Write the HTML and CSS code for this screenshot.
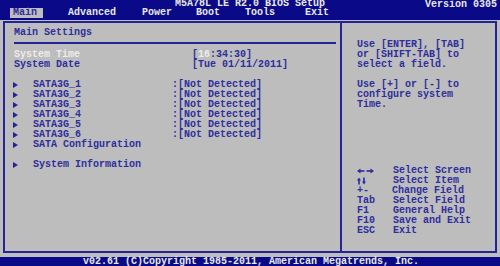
FILE: index.html
```html
<!DOCTYPE html>
<html lang="en">

<head>
    <meta charset="UTF-8">
    <meta name="viewport" content="width=device-width, initial-scale=1.0">
    <title>BIOS Setup - Main</title>
    <link rel="stylesheet" href="styles.css">
</head>

<body>
    <div class="topbar">
        <div class="title-row">
            <span></span>
            <span class="title">M5A78L LE R2.0 BIOS Setup</span>
            <span class="version">Version 0305</span>
        </div>
        <div class="tabs">
            <div class="tab"><span class="active">Main</span></div>
            <div class="tab"><span>Advanced</span></div>
            <div class="tab"><span>Power</span></div>
            <div class="tab"><span>Boot</span></div>
            <div class="tab"><span>Tools</span></div>
            <div class="tab"><span>Exit</span></div>
        </div>
    </div>

    <div class="screen">
        <div class="frame">
            <div class="left-panel">
                <div class="heading">Main Settings</div>
                <div class="rule"></div>

                <div class="row selected">
                    <span>System Time</span>
                    <span class="value">[<span class="field">16</span>:34:30]</span>
                </div>
                <div class="row">
                    <span>System Date</span>
                    <span class="value">[Tue 01/11/2011]</span>
                </div>

                <div class="blank"></div>

                <div class="sub"><i class="arrow"></i><span>SATA3G_1</span><span>:[Not Detected]</span></div>
                <div class="sub"><i class="arrow"></i><span>SATA3G_2</span><span>:[Not Detected]</span></div>
                <div class="sub"><i class="arrow"></i><span>SATA3G_3</span><span>:[Not Detected]</span></div>
                <div class="sub"><i class="arrow"></i><span>SATA3G_4</span><span>:[Not Detected]</span></div>
                <div class="sub"><i class="arrow"></i><span>SATA3G_5</span><span>:[Not Detected]</span></div>
                <div class="sub"><i class="arrow"></i><span>SATA3G_6</span><span>:[Not Detected]</span></div>
                <div class="sub"><i class="arrow"></i><span>SATA Configuration</span><span></span></div>

                <div class="blank"></div>

                <div class="sub"><i class="arrow"></i><span>System Information</span><span></span></div>
            </div>

            <div class="right-panel">
                <div class="help">
                    <div>Use [ENTER], [TAB]</div>
                    <div>or [SHIFT-TAB] to</div>
                    <div>select a field.</div>
                    <div class="blank"></div>
                    <div>Use [+] or [-] to</div>
                    <div>configure system</div>
                    <div>Time.</div>
                </div>

                <div class="legend">
                    <span class="key">
                        <svg width="17" height="10" viewBox="0 0 17 10">
                            <polygon points="0,5 3.5,2.5 3.5,7.5" fill="#2b2b9b"/>
                            <rect x="3" y="4.2" width="4.5" height="1.6" fill="#2b2b9b"/>
                            <rect x="9.5" y="4.2" width="4.5" height="1.6" fill="#2b2b9b"/>
                            <polygon points="17,5 13.5,2.5 13.5,7.5" fill="#2b2b9b"/>
                        </svg>
                    </span>
                    <span>Select Screen</span>
                    <span class="key">
                        <svg width="10" height="10" viewBox="0 0 10 10">
                            <polygon points="2,1.5 0,4.5 4,4.5" fill="#2b2b9b"/>
                            <rect x="1.2" y="4" width="1.6" height="4.5" fill="#2b2b9b"/>
                            <rect x="6.2" y="1.5" width="1.6" height="4.5" fill="#2b2b9b"/>
                            <polygon points="5,5.5 9,5.5 7,8.5" fill="#2b2b9b"/>
                        </svg>
                    </span>
                    <span>Select Item</span>
                    <span class="key">+-</span>
                    <span class="shift">Change Field</span>
                    <span class="key">Tab</span>
                    <span>Select Field</span>
                    <span class="key">F1</span>
                    <span>General Help</span>
                    <span class="key">F10</span>
                    <span>Save and Exit</span>
                    <span class="key">ESC</span>
                    <span>Exit</span>
                </div>
            </div>
        </div>
    </div>

    <div class="footer">v02.61 (C)Copyright 1985-2011, American Megatrends, Inc.</div>
</body>

</html>
```

FILE: styles.css
```css
* {
    margin: 0;
    padding: 0;
    box-sizing: border-box;
}

body {
    font-family: 'Liberation Mono', 'Courier New', monospace;
    font-weight: bold;
    font-size: 10px;
    line-height: 10px;
    background: #bdbdbd;
    color: #2e2e9e;
    width: 500px;
    height: 266px;
    overflow: hidden;
}

/* top bar */
.topbar {
    background: #0a0a88;
    color: #e8e8e8;
    height: 20px;
}

.title-row {
    display: grid;
    grid-template-columns: 1fr auto 1fr;
    height: 8px;
    line-height: 8px;
    align-items: start;
}

.version {
    justify-self: end;
    padding-right: 3px;
    margin-top: 1px;
}

.tabs {
    display: grid;
    grid-template-columns: 55px 74px 54px 49px 60px auto;
    padding-left: 10px;
    height: 10px;
}

.tab span {
    display: inline-block;
    height: 10px;
    padding: 0 6px 0 3px;
}

.tab .active {
    background: #bdbdbd;
    color: #2e2e9e;
}

/* main frame */
.screen {
    padding: 1px 3px 4px;
}

.frame {
    height: 232px;
    border: 2px solid #24249a;
    display: grid;
    grid-template-columns: 337px 1fr;
}

.left-panel {
    border-right: 2px solid #24249a;
    padding: 5px 4px 0 8px;
}

.heading {
    margin-left: 1px;
    height: 10px;
}

.rule {
    height: 2px;
    background: #24249a;
    margin: 4px 0 6px 1px;
}

.row {
    display: grid;
    grid-template-columns: 178px auto;
    margin-left: 1px;
    height: 10px;
}

.row.selected > span:first-child {
    color: #ececec;
}

.field {
    color: #ececec;
}

.blank {
    height: 10px;
}

.sub {
    display: grid;
    grid-template-columns: 20px 139px auto;
    align-items: center;
    height: 10px;
}

.arrow {
    display: block;
    width: 0;
    height: 0;
    border-left: 5px solid #24249a;
    border-top: 3px solid transparent;
    border-bottom: 3px solid transparent;
}

/* help panel */
.right-panel {
    padding: 17px 4px 15px 15px;
    display: flex;
    flex-direction: column;
    justify-content: space-between;
}

.legend {
    display: grid;
    grid-template-columns: 36px auto;
    grid-auto-rows: 10px;
}

.key {
    display: flex;
    align-items: center;
}

.shift {
    margin-left: -1px;
}

/* footer */
.footer {
    background: #0a0a88;
    color: #e8e8e8;
    height: 9px;
    text-align: center;
    padding-left: 2px;
}
```
